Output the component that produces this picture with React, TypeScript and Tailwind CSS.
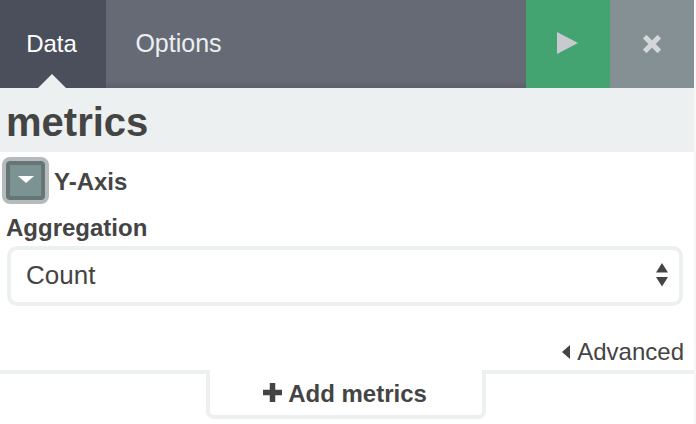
const font = "font-['Liberation_Sans',Arial,sans-serif]";

function NavBar() {
  return (
    <div className="flex h-[88px] bg-[linear-gradient(to_bottom,#666a75_0,#666a75_92%,#5c5f6a_100%)] text-[24px]">
      <div className="relative flex w-[106px] items-center justify-center bg-[#4b4f5b] pr-[3px] text-white">
        Data
        {/* active tab caret */}
        <div className="absolute bottom-0 left-[38px] h-0 w-0 border-x-[14px] border-b-[14px] border-x-transparent border-b-[#ecf0f1]" />
      </div>
      <div className="flex w-[145px] items-center justify-center text-[25px] text-[#ecf0f1]">Options</div>
      <div className="flex-1" />
      <div className="flex w-[84px] items-center justify-center bg-[#43a472]">
        <svg width="21" height="22" viewBox="0 0 21 22" className="-translate-x-[1px] -translate-y-[1px]">
          <path d="M0 0 L21 11 L0 22 Z" fill="#c8cad0" />
        </svg>
      </div>
      <div className="flex w-[84px] items-center justify-center bg-[#859094]">
        <svg width="18" height="18" viewBox="0 0 18 18">
          <path d="M3 3 L15 15 M15 3 L3 15" stroke="#d4d7da" strokeWidth="5.5" strokeLinecap="square" transform="translate(9 9) scale(0.93) translate(-9 -9)" />
        </svg>
      </div>
    </div>
  );
}

function CollapseButton() {
  return (
    <div className="flex h-[47px] w-[47px] items-center justify-center rounded-[8px] border-[4px] border-[#b5baba] bg-[#7b9493] shadow-[inset_0_0_0_4px_#667575]">
      <div className="h-0 w-0 -translate-y-[1px] border-x-[8px] border-t-[7px] border-x-transparent border-t-white" />
    </div>
  );
}

export default function App() {
  return (
    <div className={`h-[424px] w-[696px] overflow-hidden bg-[#f6f6f6] pr-[2px] ${font} text-[#444444]`}>
      <div className="h-full bg-white">
        <NavBar />
        <div className="flex h-[64px] items-center bg-[#ecf0f1] pl-[6px] pt-[3px] text-[40px] font-bold">metrics</div>

        <div className="flex items-center gap-[5px] pl-[2px] pt-[5px] text-[24px] font-bold">
          <CollapseButton />
          <span className="translate-y-[1px]">Y-Axis</span>
        </div>

        <div className="pl-[7px] pr-[11px]">
          <div className="-ml-px mt-[10px] text-[24px] leading-[28px] font-bold">Aggregation</div>
          <div className="mt-[4px] flex h-[60px] items-center justify-between rounded-[10px] border-[4px] border-[#ecf0f1] pl-[15px] pr-[11px] text-[26px]">
            <span className="-translate-y-[1px]">Count</span>
            <svg width="12" height="24" viewBox="0 0 12 24" className="-translate-y-[1px]">
              <path d="M6 0 L12 9.5 L0 9.5 Z M0 14 L12 14 L6 23.5 Z" fill="#444444" />
            </svg>
          </div>
          <div className="mt-[32px] -mr-px flex items-center justify-end gap-[7px] text-[24px] leading-[28px]">
            <svg width="8" height="14" viewBox="0 0 8 14">
              <path d="M8 0 L8 14 L0 7 Z" fill="#444444" />
            </svg>
            <span>Advanced</span>
          </div>
        </div>

        <div className="mt-[4px] flex border-t-[4px] border-[#ecf0f1]">
          <div className="relative z-10 ml-[206px] -mt-[4px] flex h-[49px] w-[280px] items-center justify-center gap-[6px] rounded-b-[8px] border-x-[4px] border-b-[4px] border-[#ecf0f1] bg-white pr-[2px] pt-[2px] text-[24px] font-bold">
            <svg width="19" height="19" viewBox="0 0 19 19" className="-translate-y-[1px]">
              <path d="M9.5 0 V19 M0 9.5 H19" stroke="#444444" strokeWidth="5.5" />
            </svg>
            <span>Add metrics</span>
          </div>
        </div>
      </div>
    </div>
  );
}
